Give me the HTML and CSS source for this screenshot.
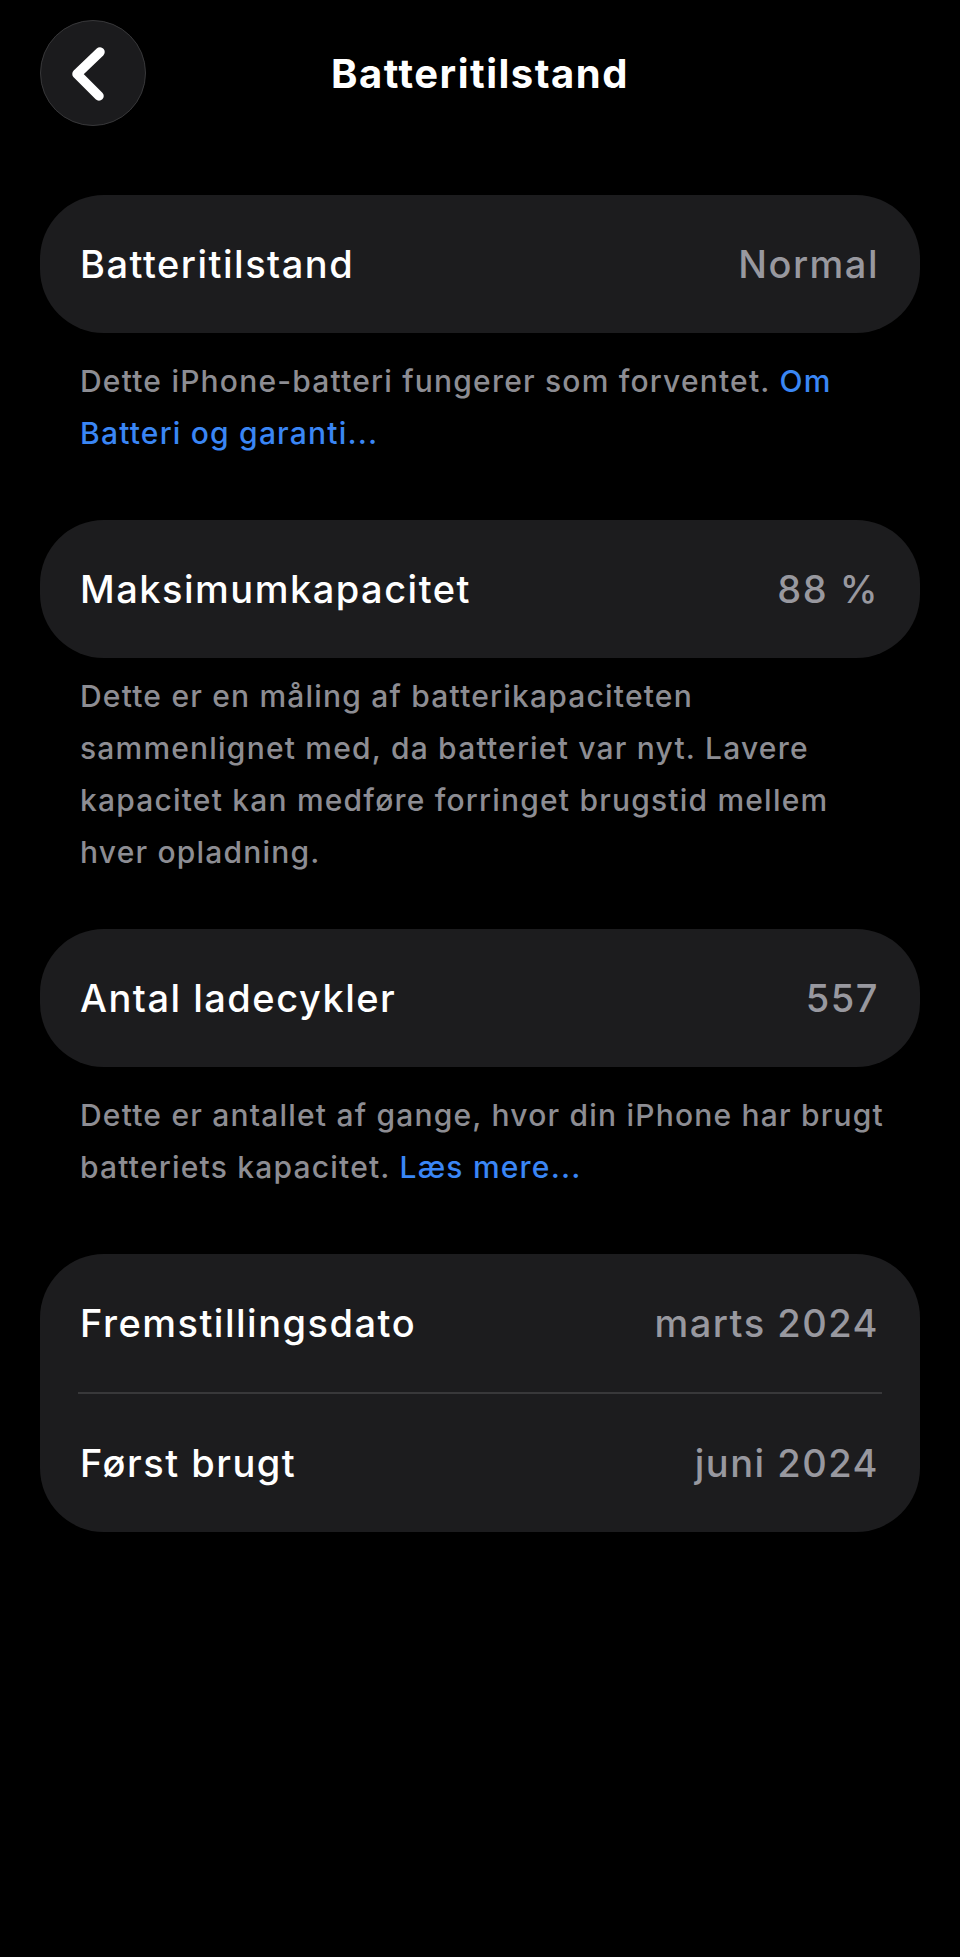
FILE: index.html
```html
<!DOCTYPE html>
<html lang="da">
<head>
    <meta charset="UTF-8">
    <meta name="viewport" content="width=device-width, initial-scale=1.0">
    <title>Batteritilstand</title>
    <link rel="stylesheet" href="styles.css">
</head>
<body>
    <div class="screen">
        <!-- topbar: tilbage-knap + titel -->
        <header class="topbar">
            <button class="back" aria-label="Tilbage">
                <svg viewBox="0 0 106 106" width="106" height="106">
                    <path d="M60 32 L37 54 L59 76" fill="none" stroke="#fff" stroke-width="9.5" stroke-linecap="round" stroke-linejoin="round"/>
                </svg>
            </button>
            <h1>Batteritilstand</h1>
            <span></span>
        </header>

        <section class="group first">
            <div class="card">
                <div class="row">
                    <span class="label">Batteritilstand</span>
                    <span class="value">Normal</span>
                </div>
            </div>
            <p class="foot">Dette iPhone-batteri fungerer som forventet. <a href="#">Om<br>Batteri og garanti...</a></p>
        </section>

        <section class="group spaced">
            <div class="card">
                <div class="row">
                    <span class="label">Maksimumkapacitet</span>
                    <span class="value">88 %</span>
                </div>
            </div>
            <p class="foot tight">Dette er en måling af batterikapaciteten<br>sammenlignet med, da batteriet var nyt. Lavere<br>kapacitet kan medføre forringet brugstid mellem<br>hver opladning.</p>
        </section>

        <section class="group">
            <div class="card">
                <div class="row">
                    <span class="label">Antal ladecykler</span>
                    <span class="value">557</span>
                </div>
            </div>
            <p class="foot">Dette er antallet af gange, hvor din iPhone har brugt<br>batteriets kapacitet. <a href="#">Læs mere...</a></p>
        </section>

        <section class="group spaced">
            <div class="card">
                <div class="row">
                    <span class="label">Fremstillingsdato</span>
                    <span class="value">marts 2024</span>
                </div>
                <div class="divider"></div>
                <div class="row">
                    <span class="label">Først brugt</span>
                    <span class="value">juni 2024</span>
                </div>
            </div>
        </section>
    </div>
</body>
</html>
```

FILE: styles.css
```css
* {
    margin: 0;
    padding: 0;
    box-sizing: border-box;
}

body {
    background-color: #000;
    color: #fff;
    font-family: Inter, "Noto Sans", "Liberation Sans", sans-serif;
}

.screen {
    width: 960px;
    min-height: 1957px;
    padding: 20px 40px 0;
}

/* topbar */
.topbar {
    display: grid;
    grid-template-columns: 106px 1fr 106px;
    align-items: center;
    height: 106px;
}

.back {
    width: 106px;
    height: 106px;
    border-radius: 50%;
    background-color: #1b1b1d;
    border: 1.5px solid #38383a;
    display: flex;
    align-items: center;
    justify-content: center;
    cursor: pointer;
}

.back svg {
    display: block;
    margin: -1.5px;
}

.topbar h1 {
    text-align: center;
    font-size: 40px;
    font-weight: 700;
    letter-spacing: 1.5px;
}

/* grupper */
.group {
    margin-top: 51px;
}

.group.first {
    margin-top: 69px;
}

.group.spaced {
    margin-top: 61px;
}

.card {
    background-color: #1c1c1e;
    border-radius: 64px;
}

.row {
    height: 138px;
    display: flex;
    align-items: center;
    justify-content: space-between;
    padding: 0 41px 0 40px;
    font-size: 38px;
    font-weight: 500;
    letter-spacing: 1.5px;
}

.label {
    color: #fff;
}

.value {
    color: #98989f;
}

.divider {
    height: 2px;
    margin: 0 38px;
    background-color: #38383a;
}

.foot {
    padding: 22px 40px 0;
    font-size: 30px;
    font-weight: 500;
    line-height: 52px;
    letter-spacing: 1.2px;
    white-space: nowrap;
    color: #8d8d93;
}

.foot.tight {
    padding-top: 12px;
}

.foot a {
    color: #3a86f5;
    text-decoration: none;
}
```
